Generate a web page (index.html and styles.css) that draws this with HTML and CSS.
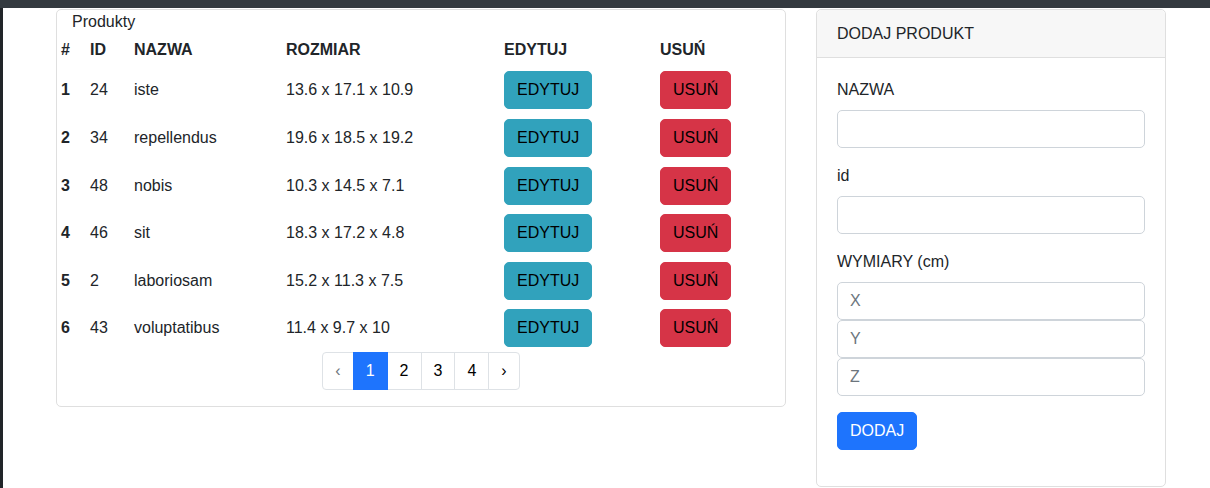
FILE: index.html
```html
<!DOCTYPE html>
<html lang="pl">
<head>
<meta charset="utf-8">
<title>Produkty</title>
<link rel="stylesheet" href="styles.css">
</head>
<body>
<div class="topbar"></div>
<div class="page">
  <main class="layout">
    <section class="card products">
      <div class="caption">Produkty</div>
      <table class="table">
        <colgroup>
          <col class="c-num"><col class="c-id"><col class="c-name"><col class="c-size"><col class="c-edit"><col class="c-del">
        </colgroup>
        <thead>
          <tr><th>#</th><th>ID</th><th>NAZWA</th><th>ROZMIAR</th><th>EDYTUJ</th><th>USUŃ</th></tr>
        </thead>
        <tbody>
          <tr><th>1</th><td>24</td><td>iste</td><td>13.6 x 17.1 x 10.9</td><td><button class="btn btn-info">EDYTUJ</button></td><td><button class="btn btn-danger">USUŃ</button></td></tr>
          <tr><th>2</th><td>34</td><td>repellendus</td><td>19.6 x 18.5 x 19.2</td><td><button class="btn btn-info">EDYTUJ</button></td><td><button class="btn btn-danger">USUŃ</button></td></tr>
          <tr><th>3</th><td>48</td><td>nobis</td><td>10.3 x 14.5 x 7.1</td><td><button class="btn btn-info">EDYTUJ</button></td><td><button class="btn btn-danger">USUŃ</button></td></tr>
          <tr><th>4</th><td>46</td><td>sit</td><td>18.3 x 17.2 x 4.8</td><td><button class="btn btn-info">EDYTUJ</button></td><td><button class="btn btn-danger">USUŃ</button></td></tr>
          <tr><th>5</th><td>2</td><td>laboriosam</td><td>15.2 x 11.3 x 7.5</td><td><button class="btn btn-info">EDYTUJ</button></td><td><button class="btn btn-danger">USUŃ</button></td></tr>
          <tr><th>6</th><td>43</td><td>voluptatibus</td><td>11.4 x 9.7 x 10</td><td><button class="btn btn-info">EDYTUJ</button></td><td><button class="btn btn-danger">USUŃ</button></td></tr>
        </tbody>
      </table>
      <nav class="pager">
        <ul class="pagination">
          <li class="page-item disabled"><span class="page-link">‹</span></li>
          <li class="page-item active"><span class="page-link">1</span></li>
          <li class="page-item"><span class="page-link">2</span></li>
          <li class="page-item"><span class="page-link">3</span></li>
          <li class="page-item"><span class="page-link">4</span></li>
          <li class="page-item"><span class="page-link">›</span></li>
        </ul>
      </nav>
    </section>
    <aside class="card add">
      <div class="card-header">DODAJ PRODUKT</div>
      <div class="card-body">
        <div class="group">
          <label class="label">NAZWA</label>
          <input class="input" type="text">
        </div>
        <div class="group">
          <label class="label">id</label>
          <input class="input" type="text">
        </div>
        <div class="group">
          <label class="label">WYMIARY (cm)</label>
          <input class="input" type="text" placeholder="X">
          <input class="input" type="text" placeholder="Y">
          <input class="input" type="text" placeholder="Z">
        </div>
        <button class="btn btn-primary">DODAJ</button>
      </div>
    </aside>
  </main>
</div>
</body>
</html>
```

FILE: styles.css
```css
* { box-sizing: border-box; }
html, body {
  margin: 0;
  padding: 0;
  background: #fff;
  font-family: "Liberation Sans", Arial, sans-serif;
  font-size: 16px;
  line-height: 24px;
  color: #212529;
}
.topbar {
  height: 8px;
  background: #343a40;
}
.page {
  border-left: 3px solid #212529;
  min-height: 480px;
}
.layout {
  display: flex;
  align-items: flex-start;
  gap: 30px;
  padding: 1px 0 0 53px;
}
.card {
  border: 1px solid #dfdfdf;
  border-radius: 5px;
  background: #fff;
}
.products {
  width: 730px;
}
.caption {
  padding-left: 15px;
  line-height: 23px;
}
.table {
  width: 100%;
  border-collapse: collapse;
  table-layout: fixed;
}
.c-num { width: 29px; }
.c-id { width: 44px; }
.c-name { width: 152px; }
.c-size { width: 218px; }
.c-edit { width: 156px; }
.table th, .table td {
  padding: 4.8px 3px 4.8px 4px;
  text-align: left;
  vertical-align: middle;
  white-space: nowrap;
}
.table th { font-weight: bold; }
.btn {
  display: inline-block;
  font-family: inherit;
  font-size: 16px;
  line-height: 24px;
  padding: 6px 12px;
  border: 1px solid transparent;
  border-radius: 5px;
  cursor: pointer;
  vertical-align: middle;
}
.btn-info { background: #31a2bc; border-color: #31a2bc; color: #000; }
.btn-danger { background: #d63447; border-color: #d63447; color: #000; }
.btn-primary { background: #1e74fd; border-color: #1e74fd; color: #fff; }
.pager {
  display: flex;
  justify-content: center;
  margin-bottom: 16px;
}
.pagination {
  display: flex;
  list-style: none;
  margin: 0;
  padding: 0;
}
.page-link {
  display: block;
  padding: 6px 12px;
  border: 1px solid #dee2e6;
  margin-left: -1px;
  color: #000;
  background: #fff;
  line-height: 24px;
}
.page-item:first-child .page-link {
  margin-left: 0;
  border-radius: 4px 0 0 4px;
}
.page-item:last-child .page-link { border-radius: 0 4px 4px 0; }
.disabled .page-link { color: #6c757d; }
.active .page-link {
  background: #1e74fd;
  border-color: #1e74fd;
  color: #fff;
  position: relative;
}
.add {
  width: 350px;
}
.card-header {
  background: #f7f7f7;
  border-bottom: 1px solid #dfdfdf;
  padding: 11.5px 20px;
  border-radius: 5px 5px 0 0;
}
.card-body {
  padding: 20px 20px 36px;
}
.group {
  margin-bottom: 16px;
}
.label {
  display: block;
  margin-bottom: 8px;
}
.input {
  display: block;
  width: 100%;
  height: 38px;
  padding: 6px 12px;
  font-family: inherit;
  font-size: 16px;
  line-height: 24px;
  color: #212529;
  background: #fff;
  border: 1px solid #ced4da;
  border-radius: 5px;
  margin: 0;
}
.input::placeholder { color: #6c757d; }
```
